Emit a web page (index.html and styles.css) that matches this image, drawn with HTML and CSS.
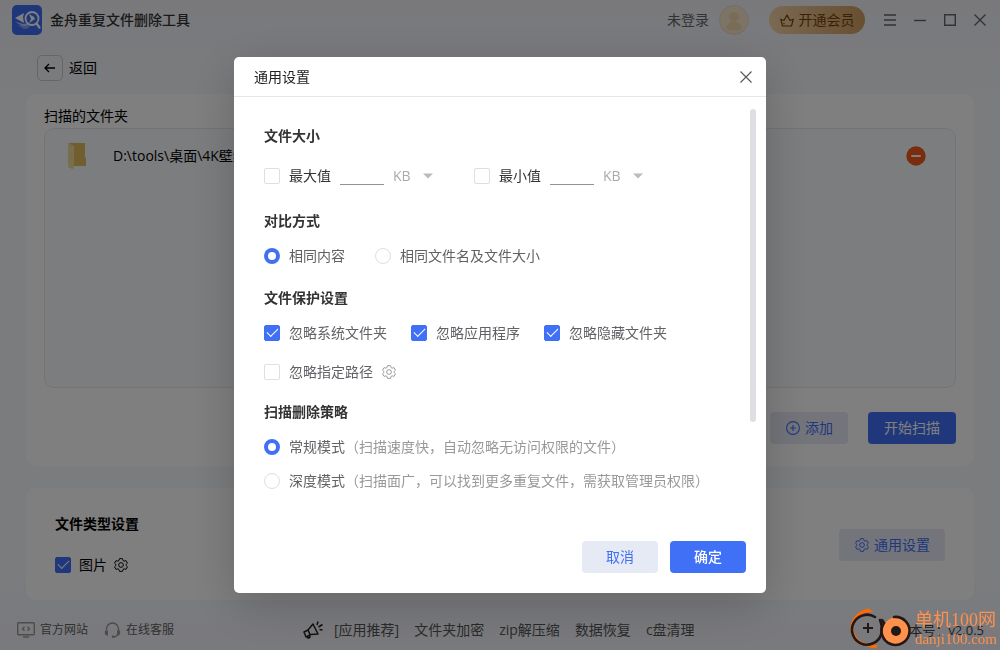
FILE: index.html
```html
<!DOCTYPE html>
<html lang="zh-CN">
<head>
<meta charset="utf-8">
<title>金舟重复文件删除工具</title>
<link rel="stylesheet" href="styles.css">
</head>
<body>
<svg class="defs" aria-hidden="true">
  <symbol id="gear" viewBox="0 0 16 16">
    <g fill="none" stroke="currentColor" stroke-width="1.1" stroke-linejoin="round">
      <path d="M6.300.7h3.400l.6 2.200 1.200.7 2.200-.6 1.700 2.900-1.600 1.500v1.200l1.600 1.500-1.700 2.900-2.200-.6-1.200.7-.6 2.200H6.300l-.6-2.200-1.200-.7-2.200.6L.6 10.100l1.600-1.500V7.400L.6 5.900 2.300 3l2.200.6 1.200-.7z"/>
      <circle cx="8" cy="8" r="2.700"/>
    </g>
  </symbol>
</svg>
<div class="app">
  <header class="titlebar">
    <svg class="logo" viewBox="0 0 30 30">
      <rect width="30" height="30" rx="5" fill="#3f6ff5"/>
      <path d="M5 20l6 1 8-1-3 3.500-4 .5z" fill="#7fa0fa"/>
      <path d="M3 16.500l8 2.500 6-1-2 3-5 0z" fill="#b5c8fd"/>
      <path d="M3 13l9-5-1 4 1 6z" fill="#fff"/>
      <circle cx="20" cy="13.500" r="6.500" fill="#3f6ff5" stroke="#fff" stroke-width="1.800"/>
      <path d="M17 9l5 3 1 2-6 4 2-4z" fill="#fff"/>
      <path d="M24.500 18.500l3 4" stroke="#fff" stroke-width="2.200" stroke-linecap="round"/>
    </svg>
    <h1 class="app-name">金舟重复文件删除工具</h1>
    <span class="login">未登录</span>
    <svg class="avatar" viewBox="0 0 30 30"><circle cx="15" cy="15" r="14.500" fill="#f8e8cd" stroke="#f5d5c8"/><circle cx="15" cy="12" r="5" fill="#f3dbb0"/><path d="M7 23q1-5 6-6h4q5 1 6 6-8 5-16 0z" fill="#f3dbb0"/></svg>
    <button class="vip"><svg viewBox="0 0 14 13" width="14" height="13"><path d="M2.500 12L.8 5.200 4 6.500 7 1l3 5.500 3.200-1.300L11.500 12zM4 9v1.200" fill="none" stroke="currentColor" stroke-width="1.200" stroke-linejoin="round"/></svg>开通会员</button>
    <div class="window-tools">
      <button class="tool" aria-label="菜单"><svg viewBox="0 0 12 12"><path d="M0 1h12M0 6h12M0 11h12"/></svg></button>
      <button class="tool" aria-label="最小化"><svg viewBox="0 0 12 12"><path d="M0 6.500h12"/></svg></button>
      <button class="tool" aria-label="最大化"><svg viewBox="0 0 12 12"><path d="M.7.7h10.600v10.600H.7z"/></svg></button>
      <button class="tool" aria-label="关闭"><svg viewBox="0 0 12 12"><path d="M.5.5l11 11M11.500.5l-11 11"/></svg></button>
    </div>
  </header>

  <main class="main">
    <nav class="back-row">
      <button class="back" aria-label="返回"><svg viewBox="0 0 12 10" width="12" height="10"><path d="M11 5H1M5 1L1 5l4 4" fill="none" stroke="currentColor" stroke-width="1.300"/></svg></button>
      <span>返回</span>
    </nav>
    <section class="card folders">
      <h2 class="folders-title">扫描的文件夹</h2>
      <div class="list">
        <div class="item">
          <svg class="folder" viewBox="0 0 20 28"><path d="M2 1h16v14.500l1 1V24H6z" fill="#e0bd5c"/><path d="M1 1l6 3v20l-1 3.500L1 25z" fill="#f0da98"/></svg>
          <span class="path">D:\tools\桌面\4K壁纸</span>
          <button class="remove" aria-label="移除"><svg viewBox="0 0 20 20" width="20" height="20"><circle cx="10" cy="10" r="9.700" fill="#f25a1a"/><path d="M6 10h8" stroke="#fff" stroke-width="2" stroke-linecap="round"/></svg></button>
        </div>
      </div>
      <div class="actions">
        <button class="btn soft"><svg viewBox="0 0 14 14" width="14" height="14"><g fill="none" stroke="currentColor" stroke-width="1.100"><circle cx="7" cy="7" r="6.400"/><path d="M7 4v6M4 7h6"/></g></svg>添加</button>
        <button class="btn primary">开始扫描</button>
      </div>
    </section>
    <section class="card types">
      <div>
        <h2 class="types-title">文件类型设置</h2>
        <div class="type-row">
          <label class="option"><input class="check" type="checkbox" checked>图片</label>
          <svg class="gear"><use href="#gear"/></svg>
        </div>
      </div>
      <button class="btn soft"><svg class="gear"><use href="#gear"/></svg>通用设置</button>
    </section>
  </main>

  <footer class="footer">
    <a class="foot-link" href="#"><svg viewBox="0 0 18 16" width="18" height="16"><rect x=".7" y=".7" width="16.600" height="12" rx="1" fill="none" stroke="currentColor" stroke-width="1.400"/><path d="M7.500 4.700L5.500 6.700l2 2M10.500 4.700l2 2-2 2M6 15h6" fill="none" stroke="currentColor" stroke-width="1.400"/></svg>官方网站</a>
    <a class="foot-link" href="#"><svg viewBox="0 0 17 16" width="17" height="16"><path d="M2.500 8V7a6 6 0 0 1 12 0v4q-1 3.500-5 4" fill="none" stroke="currentColor" stroke-width="1.400"/><path d="M1 8.500h3v5H2.500Q0 12 1 8.500zM16 8.500h-3v5h1.500Q17 12 16 8.500z" fill="currentColor"/><circle cx="9" cy="14.700" r="1.300" fill="currentColor"/></svg>在线客服</a>
    <div class="promo">
      <svg viewBox="0 0 20 18" width="20" height="18"><g fill="none" stroke="#222" stroke-width="1.500" stroke-linejoin="round"><path d="M1 11l4-2 5-6 5 10-7 .5-5 2.500zM5 9l2 4.500M4 15l1 2.200 2-.8-1-2.500M14 4l1-3.500M15.500 6l4-2.500M16.500 8.500l3 .5"/></g></svg>
      <span>[应用推荐]</span>
      <a href="#">文件夹加密</a>
      <a href="#">zip解压缩</a>
      <a href="#">数据恢复</a>
      <a href="#">c盘清理</a>
    </div>
    <span class="version">版本号：v2.0.5</span>
  </footer>
</div>

<div class="overlay">
  <form class="modal" role="dialog" aria-labelledby="dialog-title">
    <header class="modal-head">
      <h2 class="modal-title" id="dialog-title">通用设置</h2>
      <button class="modal-close" type="button" aria-label="关闭"><svg viewBox="0 0 12 12" width="12" height="12"><path d="M.5.5l11 11M11.500.5l-11 11" stroke="currentColor" stroke-width="1.100"/></svg></button>
    </header>
    <div class="modal-body">
      <div class="settings">
        <h3 class="group">文件大小</h3>
        <div class="row sizes">
          <div class="size">
            <label class="option strong"><input class="check" type="checkbox">最大值</label>
            <input class="amount" type="text" aria-label="最大值大小">
            <div class="unit"><select aria-label="最大值单位"><option>KB</option></select><svg viewBox="0 0 10 6" width="10" height="6"><path d="M0 .5h10L5 5.500z" fill="currentColor"/></svg></div>
          </div>
          <div class="size">
            <label class="option strong"><input class="check" type="checkbox">最小值</label>
            <input class="amount" type="text" aria-label="最小值大小">
            <div class="unit"><select aria-label="最小值单位"><option>KB</option></select><svg viewBox="0 0 10 6" width="10" height="6"><path d="M0 .5h10L5 5.500z" fill="currentColor"/></svg></div>
          </div>
        </div>
        <h3 class="group">对比方式</h3>
        <div class="row compare">
          <label class="option"><input class="radio" type="radio" name="compare" checked>相同内容</label>
          <label class="option"><input class="radio" type="radio" name="compare">相同文件名及文件大小</label>
        </div>
        <h3 class="group">文件保护设置</h3>
        <div class="row protect">
          <label class="option"><input class="check" type="checkbox" checked>忽略系统文件夹</label>
          <label class="option"><input class="check" type="checkbox" checked>忽略应用程序</label>
          <label class="option"><input class="check" type="checkbox" checked>忽略隐藏文件夹</label>
        </div>
        <div class="row custom">
          <label class="option"><input class="check" type="checkbox">忽略指定路径</label>
          <svg class="gear"><use href="#gear"/></svg>
        </div>
        <h3 class="group">扫描删除策略</h3>
        <div class="row"><label class="option"><input class="radio" type="radio" name="mode" checked><span>常规模式<span class="note">（扫描速度快，自动忽略无访问权限的文件）</span></span></label></div>
        <div class="row"><label class="option"><input class="radio" type="radio" name="mode"><span>深度模式<span class="note">（扫描面广，可以找到更多重复文件，需获取管理员权限）</span></span></label></div>
      </div>
      <div class="scroll"><div class="thumb"></div></div>
    </div>
    <footer class="modal-foot">
      <button class="btn cancel" type="button">取消</button>
      <button class="btn primary ok" type="button">确定</button>
    </footer>
  </form>
</div>

<div class="mark">
  <svg viewBox="0 0 64 42" width="64" height="42">
    <path d="M20 3A17 17 0 0 0 20 37L28 39" fill="none" stroke="#ff6a00" stroke-width="3"/>
    <path d="M13 4q5-7 11 0zM16 37h13q-3 5-9 2z" fill="#ff6a00"/>
    <path d="M26 9A15 15 0 1 0 32 27Q34 19 31 12" fill="none" stroke="#231815" stroke-width="2.600" stroke-linecap="round"/>
    <path d="M19 15v10M14 20h10" stroke="#231815" stroke-width="2"/>
    <circle cx="47" cy="23" r="13.500" fill="#ff914d"/>
    <path d="M45 9A14 14 0 1 1 35 15L33 12" fill="none" stroke="#231815" stroke-width="2.600" stroke-linecap="round"/>
    <circle cx="47" cy="23" r="5" fill="#231815"/>
  </svg>
  <div class="mark-text"><span class="mark-name">单机100网</span><span class="mark-site">danji100.com</span></div>
</div>
</body>
</html>
```

FILE: styles.css
```css
* { box-sizing: border-box; }
body {
  margin: 0;
  font: 14px/20px "Open Sans", "Noto Sans CJK SC", sans-serif;
  color: #000;
}
h1, h2, h3 { margin: 0; font-size: 14px; line-height: 20px; font-weight: 400; }
button, input, select { font: inherit; color: inherit; margin: 0; padding: 0; border: 0; background: none; }
a { color: inherit; text-decoration: none; }
svg { flex: none; }
.defs { position: absolute; width: 0; height: 0; }
.gear { width: 14px; height: 14px; }

.app {
  display: flex;
  flex-direction: column;
  min-height: 100vh;
  background: linear-gradient(#f2f3f9, #f7f9fd 20%, #f7f9fd 85%, #f3f4fb);
}

.titlebar { display: flex; align-items: center; height: 40px; padding: 0 14px 0 12px; color: #666; }
.logo { width: 30px; height: 30px; }
.app-name { margin-left: 8px; font-weight: 500; color: #333; }
.login { margin-left: auto; }
.avatar { width: 30px; height: 30px; margin: 0 20px 0 10px; }
.vip {
  display: flex;
  align-items: center;
  justify-content: center;
  gap: 5px;
  width: 96px;
  height: 28px;
  border-radius: 14px;
  background: linear-gradient(90deg, #f5d3a8, #d09e60);
  color: #764209;
}
.window-tools { display: flex; gap: 18px; margin-left: 19px; }
.tool { display: flex; width: 12px; height: 12px; }
.tool svg { width: 12px; height: 12px; fill: none; stroke: #666; stroke-width: 1.4; }

.main { flex: 1; display: flex; flex-direction: column; padding: 14px 26px 0; }
.back-row { display: flex; align-items: center; gap: 6px; padding: 1px 11px 0; margin-bottom: 13px; }
.back {
  display: flex;
  align-items: center;
  justify-content: center;
  width: 26px;
  height: 26px;
  border: 1px solid #ccc;
  border-radius: 5px;
}
.card { background: #fff; border-radius: 10px; }
.folders { flex: 1; display: flex; flex-direction: column; padding: 12px 18px 22px; }
.list { flex: 1; margin-top: 2px; border: 1px solid #e6e8ec; border-radius: 10px; background: #f8fafe; }
.item { display: flex; align-items: center; height: 54px; padding: 0 29px 0 22px; }
.folder { width: 20px; height: 28px; }
.path { margin-left: 26px; }
.remove { display: flex; margin-left: auto; }
.actions { display: flex; justify-content: flex-end; gap: 20px; margin-top: 24px; }
.btn {
  display: flex;
  align-items: center;
  justify-content: center;
  gap: 5px;
  height: 32px;
  padding: 0 16px;
  border-radius: 4px;
}
.soft { background: #e6eaf7; color: #4070f6; padding: 0 15px 0 16px; }
.primary { background: #4070f6; color: #fff; }
.types { display: flex; align-items: center; justify-content: space-between; margin-top: 22px; padding: 26px 29px 25px; }
.types-title { font-weight: 700; margin-bottom: 21px; }
.type-row { display: flex; align-items: center; gap: 7px; }
.type-row .option { gap: 8px; color: #000; }

.footer { display: flex; align-items: center; height: 50px; padding: 10px 16px 0 17px; color: #555; }
.foot-link { display: flex; align-items: center; gap: 5px; margin-right: 16px; font-size: 12px; color: #606060; }
.foot-link svg { color: #999; }
.promo { display: flex; align-items: center; gap: 15px; margin: 0 auto 0 113px; }
.promo svg { margin-right: -4px; }
.version { font-size: 13px; color: #444; }

.overlay {
  position: fixed;
  inset: 0;
  display: flex;
  align-items: center;
  justify-content: center;
  background: rgba(0, 0, 0, 0.5);
}
.modal {
  width: 532px;
  max-width: 100%;
  border-radius: 5px;
  background: #fff;
  box-shadow: 0 12px 48px rgba(0, 0, 0, 0.2);
}
.modal-head {
  display: flex;
  align-items: center;
  justify-content: space-between;
  height: 40px;
  padding: 0 14px 0 20px;
  border-bottom: 1px solid #e5e6e8;
}
.modal-title { color: #222; }
.modal-close { display: flex; color: #555; }
.modal-body { display: flex; padding: 12px 10px 0 30px; }
.settings { flex: 1; padding-top: 17px; }
.group { margin: 22px 0 15px; font-weight: 700; color: #333; }
.group:first-child { margin-top: 0; margin-bottom: 20px; }
.row { display: flex; align-items: center; height: 20px; margin-bottom: 14px; }
.sizes { gap: 41px; margin-bottom: 25px; }
.size { display: flex; align-items: center; gap: 9px; }
.compare { gap: 30px; }
.protect { gap: 24px; margin-bottom: 19px; }
.custom { gap: 9px; }
.custom + .group { margin-top: 20px; }
.custom .gear { color: #999; }
.option { display: flex; align-items: center; gap: 9px; color: #606266; white-space: nowrap; }
.strong { color: #333; }
.note { color: #999; }
.amount { width: 44px; height: 18px; border-bottom: 1px solid #909399; outline: 0; }
.unit { display: grid; align-items: center; width: 40px; color: #aaa; }
.unit select, .unit svg { grid-area: 1 / 1; }
.unit select { appearance: none; width: 40px; height: 20px; outline: 0; }
.unit svg { justify-self: end; pointer-events: none; color: #bbb; }
.check, .radio { appearance: none; flex: none; width: 16px; height: 16px; border: 1px solid #dcdfe8; background: #fff; }
.check { display: grid; place-items: center; border-radius: 2px; }
.check:checked { border-color: #4070f6; background: #4070f6; }
.check:checked::before {
  content: "";
  width: 10px;
  height: 5px;
  margin-bottom: 4px;
  border: solid #fff;
  border-width: 0 0 1px 1px;
  transform: rotate(-45deg);
}
.radio { border-radius: 50%; }
.radio:checked { border: 4px solid #4070f6; }
.scroll { width: 6px; }
.thumb { height: 313px; border-radius: 3px; background: #dddfe2; }
.modal-foot { display: flex; justify-content: flex-end; gap: 12px; padding: 36px 20px 20px; }
.cancel, .ok { width: 76px; }
.cancel { background: #e6eaf5; color: #4070f6; }
.ok { font-weight: 500; }

.mark { position: fixed; right: 3px; bottom: 0; display: flex; align-items: center; gap: 2px; color: #ff914d; font-family: "Liberation Serif", "Noto Sans CJK SC", serif; }
.mark-text { display: flex; flex-direction: column; white-space: nowrap; }
.mark-name { font-size: 18px; line-height: 20px; }
.mark-site { font-size: 15px; line-height: 18px; }
```
